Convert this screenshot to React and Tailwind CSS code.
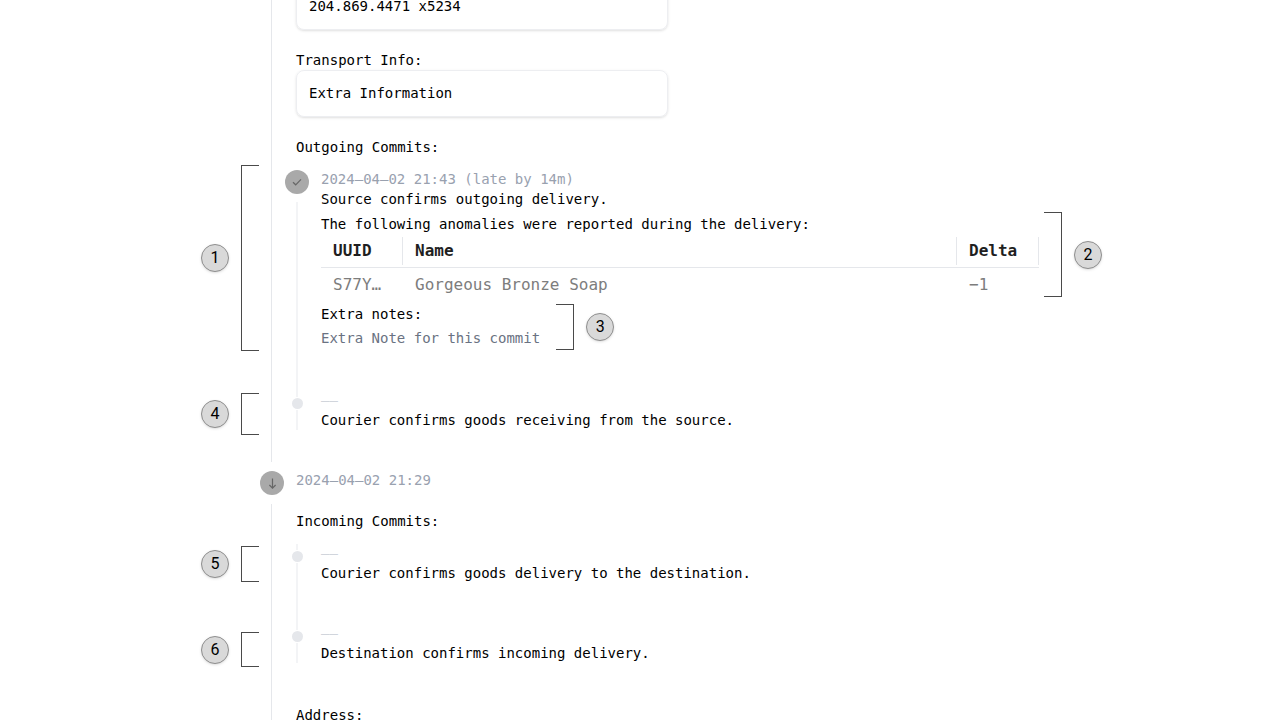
import React from "react";

function Bracket({ flip }) {
  return (
    <span
      className={
        flip
          ? "w-[18px] self-stretch border-y border-r border-[#4a4a4a]"
          : "w-[18px] self-stretch border-y border-l border-[#4a4a4a]"
      }
    />
  );
}

function Callout({ number, flip = false, className }) {
  return (
    <div className={`absolute flex items-center gap-3 ${className}`}>
      {flip && <Bracket flip />}
      <span className="flex size-7 items-center justify-center rounded-full border border-[#8f8f8f] bg-[#d9d9d9] font-[Roboto,sans-serif] text-base leading-6 text-black shadow-sm">
        {number}
      </span>
      {!flip && <Bracket />}
    </div>
  );
}

function StepIcon({ children }) {
  return (
    <span className="flex size-6 shrink-0 items-center justify-center rounded-full bg-[#a9a9a9]">
      <svg
        viewBox="0 0 12 12"
        className="size-3"
        fill="none"
        stroke="#666666"
        strokeWidth="1.2"
        aria-hidden="true"
      >
        {children}
      </svg>
    </span>
  );
}

function Check() {
  return (
    <StepIcon>
      <path d="M2 6.2 4.7 8.8 10 3.4" />
    </StepIcon>
  );
}

function ArrowDown() {
  return (
    <StepIcon>
      <path d="M6.5 1.5v9.6M3.4 8 6.5 11.1 9.6 8" />
    </StepIcon>
  );
}

function Commit({ done = false, last = false, time, title, callout, children }) {
  return (
    <li className="relative flex gap-3">
      {callout}
      <div className="flex w-6 shrink-0 flex-col items-center">
        {done ? (
          <>
            <Check />
            <span className="mt-2 w-0.5 flex-1 bg-gray-100" />
          </>
        ) : (
          <>
            <span className="h-1.5 w-0.5 bg-gray-100" />
            <span className="my-px size-[11px] rounded-full bg-gray-200" />
            <span className="w-0.5 flex-1 bg-gray-100" />
          </>
        )}
      </div>
      <div className={last ? "min-w-0 flex-1" : "min-w-0 flex-1 pb-[41px]"}>
        <p className={time ? "leading-[19px] text-gray-400" : "leading-[19px] text-gray-300"}>
          {time || "——"}
        </p>
        <p className="leading-5">{title}</p>
        {children}
      </div>
    </li>
  );
}

function InfoCard({ children }) {
  return (
    <div className="w-[372px] rounded-lg border border-gray-200/70 px-3 py-[11px] leading-[23px] shadow-sm">
      {children}
    </div>
  );
}

function Th({ className, children }) {
  return (
    <th className={`p-0 text-left font-bold ${className}`}>
      <span className="block border-r border-gray-200 px-3 leading-7">{children}</span>
    </th>
  );
}

function Anomalies() {
  return (
    <div className="relative">
      <table className="w-full table-fixed border-collapse text-base">
        <thead className="text-[#1f1f1f]">
          <tr className="h-[31px] border-b border-gray-200">
            <Th className="w-[82px]">UUID</Th>
            <Th className="">Name</Th>
            <Th className="w-[82px]">Delta</Th>
          </tr>
        </thead>
        <tbody className="text-[#7d7d7d]">
          <tr className="h-[35px]">
            <td className="px-3 py-0">S77Y…</td>
            <td className="px-3 py-0">Gorgeous Bronze Soap</td>
            <td className="px-3 py-0">−1</td>
          </tr>
        </tbody>
      </table>
      <Callout number={2} flip className="-top-6 bottom-[5px] left-full ml-[5px]" />
    </div>
  );
}

export default function App() {
  return (
    <main className="h-screen overflow-hidden bg-white pr-[241px] pl-[260px] font-['DejaVu_Sans_Mono',monospace] text-sm text-black">
      <ol>
        <li className="flex gap-3">
          <div className="flex w-6 shrink-0 flex-col items-center">
            <span className="mb-[9px] w-0.5 flex-1 border-l border-gray-200" />
          </div>
          <div className="min-w-0 flex-1 pb-[41px]">
            <div className="-mt-[17px]">
              <InfoCard>204.869.4471 x5234</InfoCard>
            </div>
            <h2 className="mt-5 leading-5">Transport Info:</h2>
            <InfoCard>Extra Information</InfoCard>
            <h2 className="mt-5 leading-5">Outgoing Commits:</h2>
            <ol className="mt-[13px] -ml-[11px]">
              <Commit
                done
                time="2024–04–02 21:43 (late by 14m)"
                title="Source confirms outgoing delivery."
                callout={<Callout number={1} className="-top-[5px] bottom-10 -left-[84px]" />}
              >
                <p className="mt-[3px] leading-6">
                  The following anomalies were reported during the delivery:
                </p>
                <Anomalies />
                <div className="relative w-fit">
                  <p className="leading-6">Extra notes:</p>
                  <p className="leading-6 text-gray-500">Extra Note for this commit</p>
                  <Callout number={3} flip className="top-0.5 bottom-0 left-full ml-4" />
                </div>
              </Commit>
              <Commit
                last
                title="Courier confirms goods receiving from the source."
                callout={<Callout number={4} className="top-0.5 -bottom-[5px] -left-[84px]" />}
              />
            </ol>
          </div>
        </li>
        <li className="flex gap-3">
          <div className="flex w-6 shrink-0 flex-col items-center">
            <ArrowDown />
            <span className="mt-[9px] w-0.5 flex-1 border-l border-gray-200" />
          </div>
          <div className="min-w-0 flex-1">
            <p className="leading-[19px] text-gray-400">2024–04–02 21:29</p>
            <h2 className="mt-[21px] leading-5">Incoming Commits:</h2>
            <ol className="mt-[13px] -ml-[11px]">
              <Commit
                title="Courier confirms goods delivery to the destination."
                callout={<Callout number={5} className="top-0.5 bottom-[42px] -left-[84px]" />}
              />
              <Commit
                last
                title="Destination confirms incoming delivery."
                callout={<Callout number={6} className="top-2 -bottom-1 -left-[84px]" />}
              />
            </ol>
            <h2 className="mt-[42px] leading-5">Address:</h2>
          </div>
        </li>
      </ol>
    </main>
  );
}
